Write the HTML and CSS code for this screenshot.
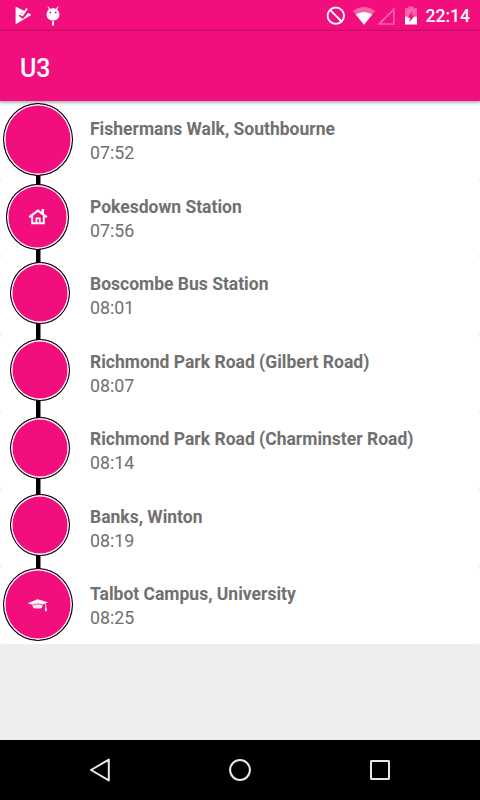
FILE: index.html
```html
<!DOCTYPE html>
<html lang="en">
<head>
  <meta charset="UTF-8">
  <meta name="viewport" content="width=device-width, initial-scale=1.0">
  <title>U3</title>
  <link rel="stylesheet" href="styles.css">
</head>
<body>
  <div class="status-bar">
    <div class="status-left">
      <svg width="17" height="18" viewBox="0 0 17 18">
        <path d="M1.2 1.6L15.4 8.8L1.2 17.2Z" fill="#fff" stroke="#fff" stroke-width="1.2" stroke-linejoin="round"/>
        <path d="M5 8.2L7.6 10.4L13.6 3.4" fill="none" stroke="#f30e7e" stroke-width="3.8"/>
        <path d="M4.6 7.4L7.4 9.2L12 2.6" fill="none" stroke="#fff" stroke-width="1.8"/>
      </svg>
      <svg width="14" height="20" viewBox="0 0 14 20">
        <path d="M2 .8L4 4M12 .8L10 4" stroke="#fff" stroke-width="1.2"/>
        <path d="M.6 8.5C.6 0 13.4 0 13.4 8.5C13.4 16.5 .6 16.5 .6 8.5Z" fill="#fff"/>
        <path d="M7 15.2V19.5" stroke="#fff" stroke-width="2"/>
        <circle cx="4.3" cy="6.5" r="0.9" fill="#f30e7e"/>
        <circle cx="9.7" cy="6.5" r="0.9" fill="#f30e7e"/>
      </svg>
    </div>
    <div class="status-right">
      <svg class="icon-block" width="20" height="20" viewBox="0 0 20 20" fill="none" stroke="#fff" stroke-width="1.9">
        <circle cx="9.8" cy="9.7" r="8.2"/>
        <path d="M4 3.9L15.6 15.5"/>
      </svg>
      <svg class="icon-wifi" width="22" height="18" viewBox="0 0 22 18">
        <path d="M0 4Q11 -4 22 4L11 17.8Z" fill="#fff" fill-opacity=".35"/>
        <path d="M2.8 7.6Q11 2.4 19.2 7.6L11 17.8Z" fill="#fff"/>
      </svg>
      <svg class="icon-signal" width="18" height="18" viewBox="0 0 18 18">
        <path d="M2.2 17H16.8V2.4Z" fill="none" stroke="#fff" stroke-opacity=".35" stroke-width="1.7"/>
      </svg>
      <svg class="icon-battery" width="12" height="19" viewBox="0 0 12 19">
        <path d="M0 2.3H3.5V.4H8.5V2.3H12V10.5H0Z" fill="#fff" fill-opacity=".35"/>
        <path d="M0 10.5H12V18.5H0Z" fill="#fff"/>
        <path d="M7.5 5.2L2.4 11.8H5.2L4.2 16.4L9.6 9.6H6.6Z" fill="#f30e7e"/>
      </svg>
      <span class="clock">22:14</span>
    </div>
  </div>

  <div class="app-bar">
    <h1>U3</h1>
  </div>

  <div class="stops">
    <div class="stop">
      <div class="track"><div class="marker end"></div></div>
      <div class="info">
        <div class="name">Fishermans Walk, Southbourne</div>
        <div class="time">07:52</div>
      </div>
    </div>
    <div class="stop">
      <div class="track">
        <div class="marker home">
          <svg width="20" height="18" viewBox="0 0 20 18">
            <path d="M1.2 9.2L10 2.6L18.8 9.2" fill="none" stroke="#fff" stroke-width="2.2"/>
            <path d="M13.6 1H16V7L13.6 5Z" fill="#fff"/>
            <path d="M4.2 8.2V15.3H15.8V8.2" fill="none" stroke="#fff" stroke-width="2"/>
            <path d="M8.4 16V10.4H11.8V16" fill="none" stroke="#fff" stroke-width="1.7"/>
          </svg>
        </div>
      </div>
      <div class="info">
        <div class="name">Pokesdown Station</div>
        <div class="time">07:56</div>
      </div>
    </div>
    <div class="stop">
      <div class="track"><div class="marker"></div></div>
      <div class="info">
        <div class="name">Boscombe Bus Station</div>
        <div class="time">08:01</div>
      </div>
    </div>
    <div class="stop">
      <div class="track"><div class="marker"></div></div>
      <div class="info">
        <div class="name">Richmond Park Road (Gilbert Road)</div>
        <div class="time">08:07</div>
      </div>
    </div>
    <div class="stop">
      <div class="track"><div class="marker"></div></div>
      <div class="info">
        <div class="name">Richmond Park Road (Charminster Road)</div>
        <div class="time">08:14</div>
      </div>
    </div>
    <div class="stop">
      <div class="track"><div class="marker"></div></div>
      <div class="info">
        <div class="name">Banks, Winton</div>
        <div class="time">08:19</div>
      </div>
    </div>
    <div class="stop">
      <div class="track">
        <div class="marker end">
          <svg width="22" height="14" viewBox="0 0 22 14">
            <path d="M.5 5.2Q6 3 10.5 1.2Q16 2.6 21 4.4L15.5 6.5Q10 4.6 5.5 6.8Z" fill="#fff"/>
            <path d="M5.3 7.4Q10.5 5.2 15.6 7.2L15 10Q10.5 11.2 6.4 10Z" fill="#fff" fill-opacity=".88"/>
            <path d="M16 5.2Q18.6 5.4 18.8 7V13" fill="none" stroke="#fff" stroke-width="1"/>
            <path d="M18.8 10V13.2" stroke="#fff" stroke-width="1.7"/>
          </svg>
        </div>
      </div>
      <div class="info">
        <div class="name">Talbot Campus, University</div>
        <div class="time">08:25</div>
      </div>
    </div>
  </div>

  <div class="nav-bar">
    <svg width="24" height="28" viewBox="0 0 24 28">
      <path d="M3 14L20.8 3.6V24.4Z"/>
    </svg>
    <svg width="24" height="28" viewBox="0 0 24 28">
      <circle cx="12" cy="14" r="9.9"/>
    </svg>
    <svg width="24" height="28" viewBox="0 0 24 28">
      <rect x="3" y="5" width="18" height="18" rx="0.5"/>
    </svg>
  </div>
</body>
</html>
```
FILE: styles.css
```css
body {
  font-family: Roboto, sans-serif;
  background-color: #eee;
  margin: 0;
  height: 800px;
  display: flex;
  flex-direction: column;
  overflow: hidden;
}

svg {
  display: block;
  flex-shrink: 0;
}

.status-bar {
  box-sizing: border-box;
  height: 31px;
  background-color: #f30e7e;
  border-bottom: 1px solid #dd0d73;
  color: #fff;
  display: flex;
  justify-content: space-between;
  padding: 0 10px 0 15px;
}

.status-left {
  display: flex;
  gap: 14px;
  padding-top: 6px;
}

.status-right {
  display: flex;
  align-items: flex-start;
  padding-top: 6px;
}

.icon-wifi {
  margin: 1px 2px 0 7px;
}

.icon-signal {
  margin: 1px 10px 0 0;
}

.clock {
  font-size: 17.5px;
  font-weight: 500;
  line-height: 21px;
  margin-left: 9px;
}

.app-bar {
  height: 70px;
  background-color: #f30e7e;
  box-shadow: 0 1px 4px rgba(0, 0, 0, 0.45);
  display: flex;
  align-items: center;
  padding: 0 20px;
  position: relative;
  z-index: 1;
}

h1 {
  margin: 4px 0 0;
  font-size: 25px;
  font-weight: 500;
  color: #fff;
}

.stop {
  height: 77.5px;
  background-color: #fff;
  border-radius: 3px;
  display: flex;
}

/* black line running behind the markers */
.track {
  width: 76px;
  display: flex;
  justify-content: center;
  align-items: center;
  background: linear-gradient(#000, #000) 36px 0 / 4.5px 100% no-repeat;
}

.stop:first-child .track {
  background-size: 4.5px 50%;
  background-position: 36px 100%;
}

.stop:last-child .track {
  background-size: 4.5px 50%;
}

.marker {
  box-sizing: border-box;
  width: 60px;
  height: 62px;
  margin: 0 0 4px 3px;
  border: 1.4px solid #000;
  border-radius: 50%;
  background-color: #f30e7e;
  box-shadow: inset 0 0 0 1.5px #fff;
  display: flex;
  justify-content: center;
  align-items: center;
}

.marker.home {
  width: 63.5px;
  height: 65.5px;
  margin: 0 1px 1px 0;
}

.marker.end {
  width: 70px;
  height: 73px;
  margin: 0;
}

.info {
  padding: 16px 0 0 14px;
  color: #707070;
}

.name {
  font-size: 17.5px;
  font-weight: bold;
  line-height: 24px;
}

.time {
  font-size: 17.8px;
  line-height: 24px;
}

.nav-bar {
  height: 60px;
  margin-top: auto;
  background-color: #000;
  display: flex;
  justify-content: center;
  align-items: center;
  gap: 116px;
}

.nav-bar svg {
  fill: none;
  stroke: #e8e8e8;
  stroke-width: 2;
  stroke-linejoin: round;
}
```
